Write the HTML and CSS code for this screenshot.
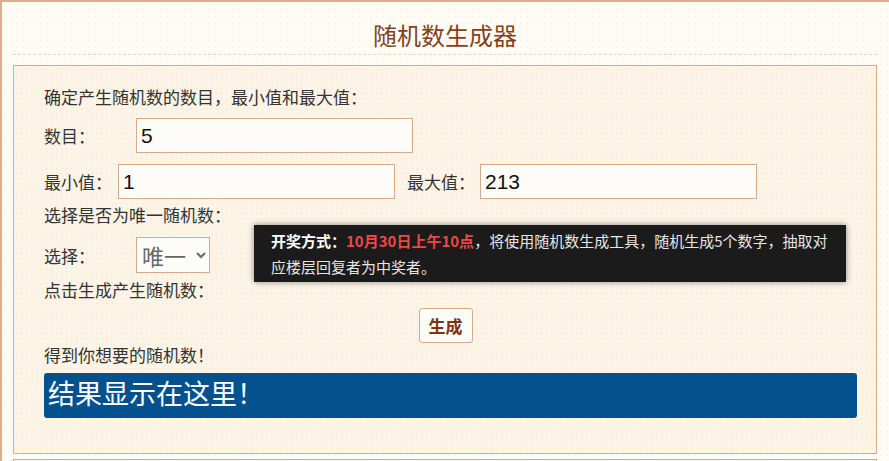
FILE: index.html
```html
<!DOCTYPE html>
<html lang="zh-CN">
<head>
    <meta charset="UTF-8">
    <title>随机数生成器</title>
    <link rel="stylesheet" href="styles.css">
</head>
<body>
    <div class="page">
        <h1 class="title">随机数生成器</h1>
        <div class="box">
            <p class="line">确定产生随机数的数目，最小值和最大值：</p>
            <div class="row row-count">
                <label class="lbl lbl-wide">数目：</label>
                <input class="num" type="text" value="5">
            </div>
            <div class="row row-range">
                <label class="lbl lbl-min">最小值：</label>
                <input class="num" type="text" value="1">
                <label class="lbl lbl-max">最大值：</label>
                <input class="num" type="text" value="213">
            </div>
            <p class="line line-uniq">选择是否为唯一随机数：</p>
            <div class="row row-select">
                <label class="lbl lbl-wide">选择：</label>
                <select class="pick">
                    <option>唯一</option>
                    <option>可重复</option>
                </select>
            </div>
            <p class="line line-click">点击生成产生随机数：</p>
            <div class="btn-row">
                <button class="gen">生成</button>
            </div>
            <p class="line line-get">得到你想要的随机数！</p>
            <div class="result">结果显示在这里！</div>

            <!-- tooltip shown over the form -->
            <div class="tip">
                <b>开奖方式：</b><b class="hot">10月30日上午10点</b>，将使用随机数生成工具，随机生成5个数字，抽取对<br>应楼层回复者为中奖者。
            </div>
        </div>
        <div class="box box-next"></div>
    </div>
</body>
</html>
```

FILE: styles.css
```css
body {
    margin: 0;
    padding: 0;
    font-family: "Liberation Serif", "Noto Sans CJK SC", serif;
    color: #333;
}
.page {
    border-top: 2px solid #d9ae92;
    border-left: 2px solid #d9ae92;
    background-color: #fffcf6;
    background-image: radial-gradient(rgba(225, 200, 165, 0.12) 1px, transparent 1px);
    background-size: 6px 6px;
    padding: 0 12px 0 11px;
    height: 459px;
    overflow: hidden;
}
.title {
    margin: 0 0 10px;
    padding: 17px 0 3px;
    font-family: "Noto Sans CJK SC", sans-serif;
    font-size: 24px;
    line-height: 32px;
    font-weight: normal;
    color: #7f4220;
    text-align: center;
    border-bottom: 1px dashed #ead6bb;
}
.box {
    position: relative;
    border: 1px solid #d5aa8b;
    background-color: #fcf4e6;
    background-image: radial-gradient(rgba(235, 215, 185, 0.25) 1px, transparent 1px);
    background-size: 5px 5px;
    padding: 21px 19px 35px 30px;
}
.box-next {
    margin-top: 5px;
    padding: 0;
    height: 20px;
}
.line {
    margin: 0;
    font-size: 17px;
    line-height: 24px;
}
.row {
    display: flex;
    align-items: center;
    font-size: 17px;
}
.row-count {
    margin-top: 7px;
}
.row-range {
    margin-top: 11px;
}
.lbl-wide {
    width: 92px;
}
.lbl-min {
    width: 74px;
}
.lbl-max {
    width: 73px;
    margin-left: 12px;
}
.num {
    box-sizing: border-box;
    width: 277px;
    height: 35px;
    border: 1px solid #d5aa8b;
    background: #fefcf8;
    padding: 0 4px;
    font-family: "Liberation Sans", Arial, sans-serif;
    font-size: 21px;
    color: #111;
    outline: none;
}
.line-uniq {
    margin-top: 6px;
}
.row-select {
    margin-top: 8px;
}
.pick {
    box-sizing: border-box;
    width: 74px;
    height: 36px;
    border: 1px solid #d5aa8b;
    border-radius: 0;
    background: #fefcf8;
    font-family: "Noto Sans CJK SC", sans-serif;
    font-size: 22px;
    color: #666;
    padding: 0 1px;
}
.line-click {
    margin-top: 7px;
}
.btn-row {
    margin-top: 4px;
    padding-right: 10px;
    text-align: center;
}
.gen {
    box-sizing: border-box;
    width: 54px;
    height: 35px;
    border: 1px solid #d5aa8b;
    border-radius: 3px;
    background: #fefcf8;
    font-family: "Noto Sans CJK SC", sans-serif;
    font-size: 17px;
    font-weight: bold;
    color: #7a3512;
    padding: 0;
    cursor: pointer;
}
.line-get {
    margin-top: 2px;
}
.result {
    margin-top: 4px;
    height: 45px;
    line-height: 45px;
    border-radius: 3px;
    background-color: #04518f;
    color: #fff;
    font-size: 27px;
    padding-left: 4px;
}
.tip {
    position: absolute;
    left: 240px;
    top: 159px;
    width: 560px;
    padding: 3px 15px 2px 17px;
    background-color: #1b1b1b;
    box-shadow: 0 0 6px rgba(0, 0, 0, 0.45);
    font-family: "Noto Sans CJK SC", sans-serif;
    font-size: 15px;
    line-height: 26px;
    color: #e6e6e6;
    white-space: nowrap;
}
.tip b {
    color: #fff;
}
.tip .hot {
    color: #f24646;
}
```
